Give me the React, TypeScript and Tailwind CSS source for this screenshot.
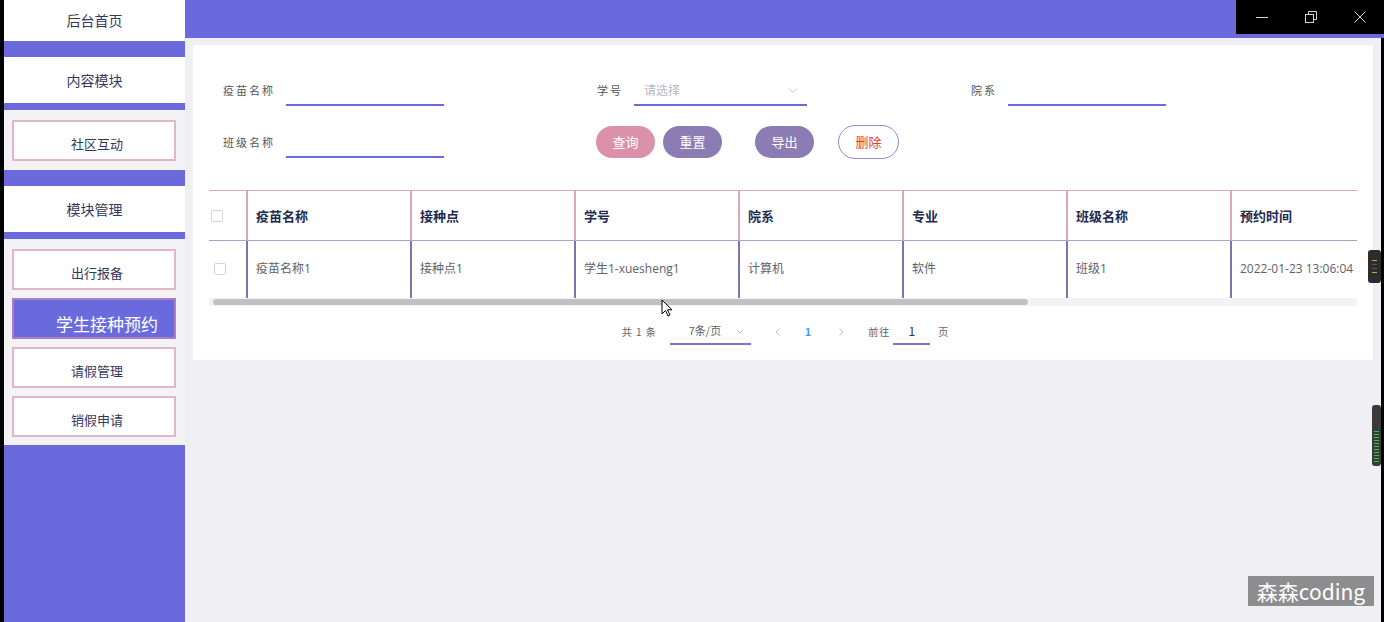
import React from "react";

const FONT = { fontFamily: '"Noto Sans CJK SC", "Noto Sans", sans-serif' };

const columns = [
  { key: "name", title: "疫苗名称" },
  { key: "place", title: "接种点" },
  { key: "student", title: "学号" },
  { key: "dept", title: "院系" },
  { key: "major", title: "专业" },
  { key: "klass", title: "班级名称" },
  { key: "time", title: "预约时间" },
  { key: "status", title: "审核状态" },
  { key: "reply", title: "审核回复" },
];

const rows = [
  {
    id: "1",
    name: "疫苗名称1",
    place: "接种点1",
    student: "学生1-xuesheng1",
    dept: "计算机",
    major: "软件",
    klass: "班级1",
    time: "2022-01-23 13:06:04",
    status: "待审核",
    reply: "",
  },
];

function NavBox({ label, active }: { label: string; active?: boolean }) {
  if (active) {
    return (
      <div className="flex h-[41px] items-center justify-center border-2 border-[#a97ccc] bg-[#6a6add] pl-[26px] pt-[10px] text-[17px] text-white">
        学生接种预约
      </div>
    );
  }
  return (
    <div className="flex h-[41px] items-center justify-center border-2 border-[#e3b6c7] bg-white pl-[6px] pt-[7px] text-[13px] text-[#35375e]">
      {label}
    </div>
  );
}

function Checkbox() {
  return <span className="block h-[12px] w-[12px] rounded-[2px] border border-[#d4d4d8] bg-white" />;
}

function FormLabel({ children }: { children: React.ReactNode }) {
  return <span className="mr-[11px] text-[11px] tracking-[2px] text-[#555]">{children}</span>;
}

function Sidebar() {
  return (
    <aside className="flex w-[181px] shrink-0 flex-col bg-[#6a6add] text-[#35375e]">
      <div className="flex h-[41px] items-center justify-center bg-white text-[14px]">后台首页</div>
      <div className="h-[16px]" />
      <div className="flex h-[46px] items-center justify-center bg-white text-[14px]">内容模块</div>
      <div className="h-[7px]" />
      <div className="bg-[#f3f3f6] pb-[9px] pl-[8px] pr-[9px] pt-[10px]">
        <NavBox label="社区互动" />
      </div>
      <div className="h-[16px]" />
      <div className="flex h-[46px] items-center justify-center bg-white text-[14px]">模块管理</div>
      <div className="h-[7px]" />
      <div className="flex flex-col gap-[8px] bg-[#f3f3f6] pb-[8px] pl-[8px] pr-[9px] pt-[10px]">
        <NavBox label="出行报备" />
        <NavBox label="学生接种预约" active />
        <NavBox label="请假管理" />
        <NavBox label="销假申请" />
      </div>
    </aside>
  );
}

function WindowControls() {
  return (
    <div className="flex h-[34px] w-[148px] items-center justify-around bg-black pl-[2px] text-[#d6d6d6]">
      <svg width="14" height="14" viewBox="0 0 14 14">
        <path d="M1 7.5h12" stroke="currentColor" strokeWidth="1" />
      </svg>
      <svg width="14" height="14" viewBox="0 0 14 14" fill="none" stroke="currentColor" strokeWidth="1">
        <rect x="1.5" y="4.5" width="8" height="8" />
        <path d="M4.5 4.5V1.5h8v8h-3" />
      </svg>
      <svg width="14" height="14" viewBox="0 0 14 14" stroke="currentColor" strokeWidth="1">
        <path d="M1.5 1.5l11 11M12.5 1.5l-11 11" />
      </svg>
    </div>
  );
}

function SearchForm() {
  return (
    <div className="flex flex-col gap-[20px] pl-[30px] pt-[29px]">
      <div className="flex">
        <div className="flex h-[32px] w-[374px] items-center">
          <FormLabel>疫苗名称</FormLabel>
          <div className="h-[32px] w-[158px] border-b-2 border-[#6b6bd9]" />
        </div>
        <div className="flex h-[32px] w-[374px] items-center">
          <FormLabel>学号</FormLabel>
          <div className="flex h-[32px] w-[173px] items-center justify-between border-b-2 border-[#6b6bd9] pl-[10px] pr-[8px] pt-[1px]">
            <span className="text-[12px] text-[#b8b8c0]">请选择</span>
            <svg width="12" height="12" viewBox="0 0 12 12" fill="none" stroke="#c0c4cc" strokeWidth="1">
              <path d="M2 4.5l4 4 4-4" />
            </svg>
          </div>
        </div>
        <div className="flex h-[32px] w-[374px] items-center">
          <FormLabel>院系</FormLabel>
          <div className="h-[32px] w-[158px] border-b-2 border-[#6b6bd9]" />
        </div>
      </div>
      <div className="flex">
        <div className="flex h-[32px] w-[373px] items-center">
          <FormLabel>班级名称</FormLabel>
          <div className="h-[32px] w-[158px] border-b-2 border-[#6b6bd9]" />
        </div>
        <div className="flex h-[32px] items-center text-[13px]">
          <button className="h-[32px] w-[59px] rounded-full bg-[#dc91aa] text-white">查询</button>
          <button className="ml-[8px] h-[32px] w-[59px] rounded-full bg-[#8b7db4] text-white">重置</button>
          <button className="ml-[33px] h-[32px] w-[59px] rounded-full bg-[#8b7db4] text-white">导出</button>
          <button className="ml-[24px] h-[34px] w-[61px] rounded-full border border-[#8f89d8] bg-white text-[#e0403a]">
            删除
          </button>
        </div>
      </div>
    </div>
  );
}

function DataTable() {
  return (
    <div className="ml-[16px] mt-[32px] w-[1148px] overflow-hidden">
      <table className="w-[1514px] table-fixed border-collapse text-left">
        <colgroup>
          <col className="w-[38px]" />
          {columns.map((c) => (
            <col key={c.key} className="w-[164px]" />
          ))}
        </colgroup>
        <thead>
          <tr className="h-[50px] border-b border-t border-b-[#a7a1cd] border-t-[#dba7ba]">
            <th className="pl-[2px] align-middle">
              <Checkbox />
            </th>
            {columns.map((c) => (
              <th
                key={c.key}
                className="whitespace-nowrap border-l-2 border-[#dba7ba] pl-[8px] text-[13px] font-bold text-[#1f2b4f]"
              >
                {c.title}
              </th>
            ))}
          </tr>
        </thead>
        <tbody>
          {rows.map((r) => (
            <tr key={r.id} className="h-[57px]">
              <td className="pl-[5px] align-middle">
                <Checkbox />
              </td>
              {columns.map((c) => (
                <td
                  key={c.key}
                  className="whitespace-nowrap border-l-2 border-[#7d75aa] pl-[8px] font-['Open_Sans','Noto_Sans_CJK_SC',sans-serif] text-[12px] text-[#606266]"
                >
                  {r[c.key as keyof typeof r]}
                </td>
              ))}
            </tr>
          ))}
        </tbody>
      </table>
      <div className="h-[8px] bg-[#f3f3f5] pl-[4px] pt-[1px]">
        <div className="h-[6px] w-[815px] rounded-full bg-[#c1c1c3]" />
      </div>
    </div>
  );
}

function Pagination() {
  return (
    <div className="flex h-[52px] items-center justify-center pl-[4px] text-[11px] text-[#606266]">
      <span className="text-[10px] tracking-[1px]">共 1 条</span>
      <div className="ml-[13px] flex h-[26px] w-[81px] items-center border-b-2 border-[#7a74d0] pl-[19px] pr-[6px]">
        <span className="flex-1">7条/页</span>
        <svg width="10" height="10" viewBox="0 0 10 10" fill="none" stroke="#c0c4cc" strokeWidth="1">
          <path d="M2 4l3 3 3-3" />
        </svg>
      </div>
      <span className="ml-[22px] text-[#c0c4cc]">
        <svg width="10" height="10" viewBox="0 0 10 10" fill="none" stroke="currentColor" strokeWidth="1">
          <path d="M6.5 1.5L3 5l3.5 3.5" />
        </svg>
      </span>
      <span className="ml-[22px] font-bold text-[#409eff]">1</span>
      <span className="ml-[25px] text-[#c0c4cc]">
        <svg width="10" height="10" viewBox="0 0 10 10" fill="none" stroke="currentColor" strokeWidth="1">
          <path d="M3.5 1.5L7 5 3.5 8.5" />
        </svg>
      </span>
      <span className="ml-[22px] text-[10px] tracking-[1px]">前往</span>
      <div className="ml-[3px] flex h-[26px] w-[37px] items-center justify-center border-b-2 border-[#7a74d0] text-[12px] text-[#333]">
        1
      </div>
      <span className="ml-[8px] text-[10px]">页</span>
    </div>
  );
}

export default function App() {
  return (
    <div className="relative flex h-[622px] w-[1384px] overflow-hidden bg-black pl-[4px]" style={FONT}>
      <Sidebar />
      <main className="flex flex-1 flex-col bg-[#efeff4]">
        <header className="flex h-[38px] shrink-0 items-start justify-end bg-[#6a6add]">
          <WindowControls />
        </header>
        <div className="flex flex-1 border-r-[3px] border-black">
          <div className="flex-1 pl-[8px] pr-[8px] pt-[7px]">
            <section className="h-[315px] bg-white">
              <SearchForm />
              <DataTable />
              <Pagination />
            </section>
          </div>
        </div>
      </main>

      {/* screen recorder widgets */}
      <div className="absolute left-[1368px] top-[250px] flex h-[33px] w-[13px] flex-col items-center justify-center gap-[3px] rounded-[3px] bg-[#2c2c2c]">
        <span className="h-[1px] w-[5px] bg-[#d89a2a]" />
        <span className="h-[1px] w-[5px] bg-[#555]" />
        <span className="h-[1px] w-[5px] bg-[#555]" />
        <span className="h-[1px] w-[5px] bg-[#8bc34a]" />
      </div>
      <div className="absolute left-[1372px] top-[405px] flex h-[61px] w-[9px] flex-col justify-end gap-[2px] rounded-[3px] bg-[#3a3a3a] px-[2px] pb-[4px]">
        {Array.from({ length: 11 }).map((_, i) => (
          <span key={i} className="h-[1px] w-full bg-[#35c24a]" />
        ))}
      </div>

      {/* cursor */}
      <svg className="absolute left-[661px] top-[299px]" width="12" height="18" viewBox="0 0 12 18">
        <path d="M1 1v14l3.5-3.5 2.5 5.5 2-1-2.5-5.2H11z" fill="#fff" stroke="#000" strokeWidth="1" />
      </svg>

      {/* watermark */}
      <div className="absolute left-[1248px] top-[576px] flex h-[30px] w-[126px] items-center justify-center bg-[#8d8d8f] text-[21px] leading-none text-white">
        森森coding
      </div>
    </div>
  );
}
